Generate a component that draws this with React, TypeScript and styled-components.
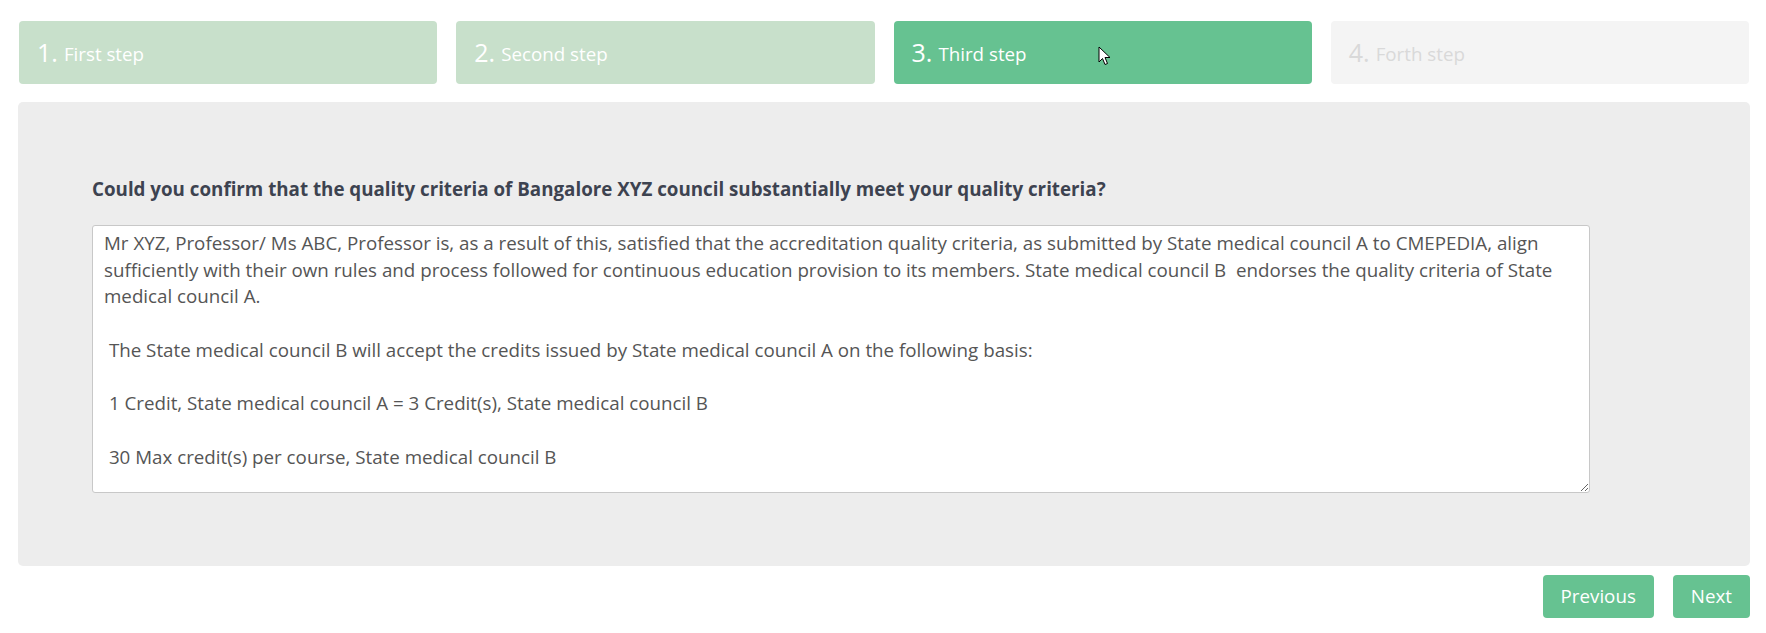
import React from 'react'
import styled, { createGlobalStyle } from 'styled-components'

const GlobalStyle = createGlobalStyle`
  html, body {
    margin: 0;
    padding: 0;
    background: #ffffff;
    font-family: 'Open Sans', 'Liberation Sans', Arial, sans-serif;
  }
  * {
    box-sizing: border-box;
  }
`

const Page = styled.div`
  padding: 21px 16px 20px 18px;
  width: 1766px;
`

const StepRow = styled.div`
  display: grid;
  grid-template-columns: repeat(4, 1fr);
  gap: 19px;
  padding: 0 1px;
`

type StepState = 'done' | 'active' | 'todo'

const stepBg: Record<StepState, string> = {
  done: '#c8e0cb',
  active: '#66c291',
  todo: '#f4f4f4',
}

const StepBox = styled.div<{ $state: StepState }>`
  position: relative;
  display: flex;
  align-items: center;
  height: 63px;
  padding: 0 18px;
  border-radius: 4px;
  background: ${(p) => stepBg[p.$state]};
  color: ${(p) => (p.$state === 'todo' ? '#d9d9d9' : '#ffffff')};
  white-space: nowrap;
`

const StepNumber = styled.span`
  font-size: 25px;
  line-height: 1;
  margin-right: 6px;
`

const StepLabel = styled.span`
  font-size: 18.75px;
  line-height: 1;
  padding-top: 4px;
`

const Cursor = styled.svg`
  position: absolute;
  left: 204px;
  top: 25px;
  width: 13px;
  height: 20px;
`

const Panel = styled.div`
  margin-top: 18px;
  background: #ededed;
  border-radius: 5px;
  padding: 74px 160px 73px 74px;
`

const Question = styled.label`
  display: block;
  font-size: 18.75px;
  font-weight: 700;
  line-height: 1.42857;
  color: #3d4350;
  margin-bottom: 22px;
`

const Answer = styled.textarea`
  display: block;
  width: 100%;
  height: 268px;
  margin: 0;
  padding: 4px 11px;
  font-family: 'Open Sans', 'Liberation Sans', Arial, sans-serif;
  font-size: 18.75px;
  line-height: 1.42857;
  color: #555555;
  background: #ffffff;
  border: 1px solid #c8c8c8;
  border-radius: 3px;
  resize: vertical;
  outline: none;
`

const Actions = styled.div`
  display: flex;
  justify-content: flex-end;
  gap: 19px;
  margin-top: 9px;
`

const ActionButton = styled.button`
  height: 43px;
  padding: 0 18px;
  border: none;
  border-radius: 4px;
  background: #66c291;
  color: #ffffff;
  font-family: 'Open Sans', 'Liberation Sans', Arial, sans-serif;
  font-size: 18.75px;
  line-height: 1;
  cursor: pointer;
`

const steps: { num: string; label: string; state: StepState }[] = [
  { num: '1.', label: 'First step', state: 'done' },
  { num: '2.', label: 'Second step', state: 'done' },
  { num: '3.', label: 'Third step', state: 'active' },
  { num: '4.', label: 'Forth step', state: 'todo' },
]

const answerText = [
  'Mr XYZ, Professor/ Ms ABC, Professor is, as a result of this, satisfied that the accreditation quality criteria, as submitted by State medical council A to CMEPEDIA, align sufficiently with their own rules and process followed for continuous education provision to its members. State medical council B  endorses the quality criteria of State medical council A.',
  '',
  ' The State medical council B will accept the credits issued by State medical council A on the following basis:',
  '',
  ' 1 Credit, State medical council A = 3 Credit(s), State medical council B',
  '',
  ' 30 Max credit(s) per course, State medical council B',
].join('\n')

const App: React.FC = () => {
  return (
    <Page>
      <GlobalStyle />
      <StepRow>
        {steps.map((s) => (
          <StepBox key={s.num} $state={s.state}>
            <StepNumber>{s.num}</StepNumber>
            <StepLabel>{s.label}</StepLabel>
            {s.state === 'active' && (
              <Cursor viewBox="0 0 13 20">
                <path
                  d="M1 1 L1 16 L4.5 12.5 L7 18.5 L9.5 17.5 L7 11.5 L12 11.5 Z"
                  fill="#ffffff"
                  stroke="#000000"
                  strokeWidth="1"
                  strokeLinejoin="miter"
                />
              </Cursor>
            )}
          </StepBox>
        ))}
      </StepRow>
      <Panel>
        <Question htmlFor="quality-answer">
          Could you confirm that the quality criteria of Bangalore XYZ council substantially meet your quality criteria?
        </Question>
        <Answer id="quality-answer" defaultValue={answerText} spellCheck={false} />
      </Panel>
      <Actions>
        <ActionButton>Previous</ActionButton>
        <ActionButton>Next</ActionButton>
      </Actions>
    </Page>
  )
}

export default App
